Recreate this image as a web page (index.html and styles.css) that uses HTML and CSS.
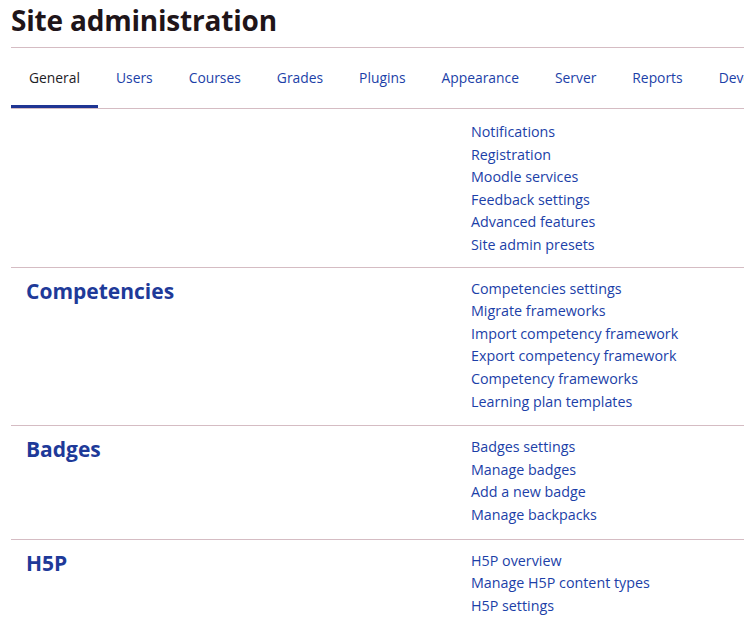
FILE: index.html
```html
<!DOCTYPE html>
<html lang="en">
<head>
<meta charset="utf-8">
<title>Site administration</title>
<link rel="stylesheet" href="styles.css">
</head>
<body>
<div class="page">
  <h1 class="title">Site administration</h1>
  <nav class="tabs">
    <a class="tab active">General</a>
    <a class="tab">Users</a>
    <a class="tab">Courses</a>
    <a class="tab">Grades</a>
    <a class="tab">Plugins</a>
    <a class="tab">Appearance</a>
    <a class="tab">Server</a>
    <a class="tab">Reports</a>
    <a class="tab">Development</a>
  </nav>
  <section class="section first">
    <h2 class="section-title"></h2>
    <ul class="links">
      <li><a>Notifications</a></li>
      <li><a>Registration</a></li>
      <li><a>Moodle services</a></li>
      <li><a>Feedback settings</a></li>
      <li><a>Advanced features</a></li>
      <li><a>Site admin presets</a></li>
    </ul>
  </section>
  <section class="section">
    <h2 class="section-title">Competencies</h2>
    <ul class="links">
      <li><a>Competencies settings</a></li>
      <li><a>Migrate frameworks</a></li>
      <li><a>Import competency framework</a></li>
      <li><a>Export competency framework</a></li>
      <li><a>Competency frameworks</a></li>
      <li><a>Learning plan templates</a></li>
    </ul>
  </section>
  <section class="section">
    <h2 class="section-title">Badges</h2>
    <ul class="links">
      <li><a>Badges settings</a></li>
      <li><a>Manage badges</a></li>
      <li><a>Add a new badge</a></li>
      <li><a>Manage backpacks</a></li>
    </ul>
  </section>
  <section class="section">
    <h2 class="section-title">H5P</h2>
    <ul class="links">
      <li><a>H5P overview</a></li>
      <li><a>Manage H5P content types</a></li>
      <li><a>H5P settings</a></li>
    </ul>
  </section>
</div>
</body>
</html>
```
FILE: styles.css
```css
html, body {
  margin: 0;
  padding: 0;
  background: #ffffff;
  overflow: hidden;
}
body {
  font-family: "Open Sans", "Noto Sans", sans-serif;
  color: #1d2125;
}
.page {
  padding-left: 11px;
}
.title {
  margin: 0;
  padding: 0 0 9px 0;
  height: 38px;
  font-size: 28px;
  line-height: 40px;
  font-weight: 700;
  color: #1f1519;
  border-bottom: 1px solid #d5bcc3;
  letter-spacing: -0.2px;
}
.tabs {
  display: flex;
  flex-wrap: nowrap;
  height: 60px;
  border-bottom: 1px solid #d5bcc3;
  overflow: hidden;
  white-space: nowrap;
}
.tab {
  flex: none;
  display: flex;
  align-items: center;
  padding: 0 18px 1px;
  font-size: 13.85px;
  color: #1c3fa8;
  box-sizing: border-box;
  height: 60px;
}
.tab.active {
  color: #1d2125;
  border-bottom: 3px solid #1f3593;
  padding-top: 1px;
  padding-bottom: 0;
}
.section {
  display: grid;
  grid-template-columns: 445px 1fr;
  padding: 10px 0 12px 15px;
  border-top: 1px solid #d5bcc3;
}
.section.first {
  border-top: none;
  padding-top: 12px;
  padding-bottom: 10px;
}
.section-title {
  margin: 0;
  font-size: 21px;
  line-height: 26px;
  font-weight: 700;
  color: #1e3a99;
}
.links {
  list-style: none;
  margin: 0;
  padding: 0;
}
.links li {
  font-size: 14.3px;
  line-height: 22.6px;
}
.links a {
  color: #1c3fa8;
}
```
